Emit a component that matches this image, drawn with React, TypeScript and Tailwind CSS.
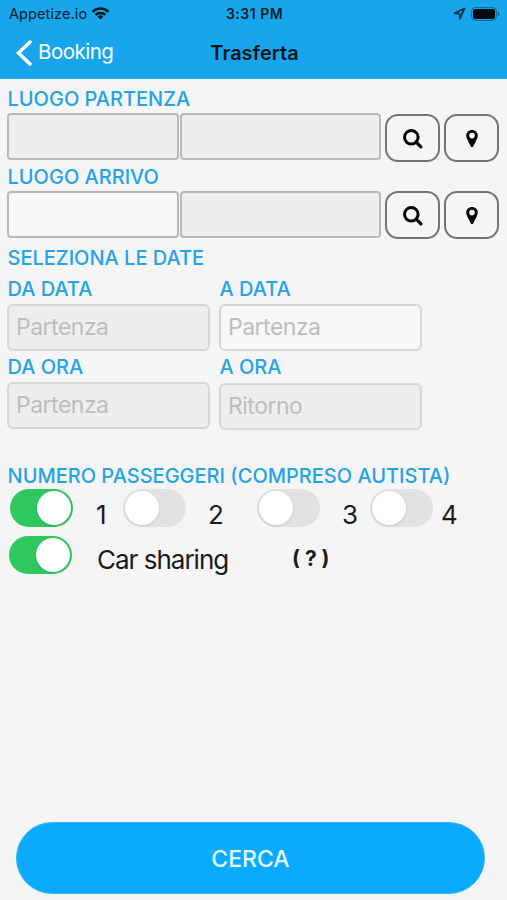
import React from "react";
import { clsx } from "clsx";

function Label({ children, className }: { children: React.ReactNode; className?: string }) {
  return (
    <div className={clsx("whitespace-nowrap text-[20px] font-medium text-[#24a3e6]", className)}>
      {children}
    </div>
  );
}

function Field({ placeholder, className }: { placeholder?: string; className?: string }) {
  return (
    <input
      readOnly
      placeholder={placeholder}
      className={clsx(
        "block h-[47px] min-w-0 border-2 pb-[2px] pl-[7px] pr-2 text-[23px] tracking-[-0.5px] outline-none placeholder:text-[#bdbdbf]",
        className,
      )}
    />
  );
}

function SearchIcon() {
  return (
    <svg width="20" height="20" viewBox="0 0 20 20" fill="none" stroke="#080808">
      <circle cx="8.300" cy="8.300" r="6.800" strokeWidth="3" />
      <path d="M13.200 13.200L17.900 17.800" strokeWidth="3.200" strokeLinecap="round" />
    </svg>
  );
}

function PinIcon() {
  return (
    <svg width="14" height="20" viewBox="0 0 14 20">
      <path
        fillRule="evenodd"
        fill="#080808"
        d="M7 1C3.700 1 1.200 3.400 1.200 6.600c0 1.400.4 2.400 1 3.600l3.600 7.200c.5 1 1.900 1 2.400 0l3.600-7.200c.6-1.200 1-2.200 1-3.600C12.800 3.400 10.300 1 7 1zm0 2.800a2.800 2.800 0 1 1 0 5.600 2.800 2.800 0 0 1 0-5.600z"
      />
    </svg>
  );
}

function IconButton({ children, className }: { children: React.ReactNode; className?: string }) {
  return (
    <button
      className={clsx(
        "flex h-[48px] w-[55px] shrink-0 items-center justify-center rounded-[13px] border-2 border-[#747474]",
        className,
      )}
    >
      {children}
    </button>
  );
}

function PlaceRow({ open, drop }: { open?: boolean; drop?: boolean }) {
  const offset = drop ? "mt-px" : "";
  return (
    <div className="flex h-[48px] items-start pl-[7px]">
      <Field className={clsx("w-[172px] rounded-[4px] border-[#b9b9b9]", open ? "bg-[#f7f7f7]" : "bg-[#eeeeee]")} />
      <Field className="ml-px w-[201px] rounded-[4px] border-[#b9b9b9] bg-[#eeeeee]" />
      <IconButton className={clsx("ml-[4px]", offset)}>
        <span className="mt-[2px]">
          <SearchIcon />
        </span>
      </IconButton>
      <IconButton className={clsx("ml-[4px]", offset)}>
        <span className="mt-[2px]">
          <PinIcon />
        </span>
      </IconButton>
    </div>
  );
}

function Switch({ on, className }: { on?: boolean; className?: string }) {
  return (
    <div
      role="switch"
      aria-checked={!!on}
      className={clsx(
        "flex h-[38px] w-[63px] shrink-0 items-center rounded-full px-[2px]",
        on ? "justify-end bg-[#2fc85f]" : "bg-[#e2e2e4]",
        className,
      )}
    >
      <div className="size-[34px] rounded-full bg-white shadow-[0_1px_3px_rgba(0,0,0,0.13)]" />
    </div>
  );
}

const digit = "mt-[10px] shrink-0 text-[26px] leading-[32px] text-[#1b1b1b]";
const soft = "w-[203px] rounded-[6px] border-[#d6d6d6]";

export default function App() {
  return (
    <div className="flex h-[900px] w-[507px] flex-col overflow-hidden bg-[#f5f5f5] font-['Inter',sans-serif]">
      <header className="h-[79px] shrink-0 bg-[#17a6ec] text-[#071c2b]">
        <div className="grid h-[27px] grid-cols-3 items-center pl-[9px] pr-[7px]">
          <div className="flex items-center gap-[4px]">
            <span className="text-[14.5px] tracking-[0.1px]">Appetize.io</span>
            <svg width="19" height="13" viewBox="0 0 20 14" fill="none" stroke="#071520" strokeWidth="2.700">
              <path d="M1.500 5.200a12 12 0 0 1 17 0" />
              <path d="M4.600 8.600a7.600 7.600 0 0 1 10.800 0" />
              <path d="M10 13.500L6.900 10.400a4.400 4.400 0 0 1 6.200 0z" fill="#071520" stroke="none" />
            </svg>
          </div>
          <div className="text-center text-[14px] font-semibold tracking-[0.5px]">3:31 PM</div>
          <div className="flex items-center justify-end gap-[5px]">
            <svg width="13" height="13" viewBox="0 0 13 13" fill="none" stroke="#0a3047" strokeWidth="1.800" strokeLinejoin="round">
              <path d="M11.500 1.500L1.500 6.300l5.100.3.300 5.100z" />
            </svg>
            <svg width="29" height="14" viewBox="0 0 29 14">
              <rect x=".6" y=".6" width="24.800" height="12.800" rx="3.500" fill="none" stroke="#0b6597" strokeWidth="1" />
              <rect x="2" y="2" width="22" height="10" rx="2.200" fill="#020608" />
              <path d="M26.800 5v4c1.200-.3 1.600-1 1.600-2s-.4-1.700-1.600-2z" fill="#0b6597" />
            </svg>
          </div>
        </div>
        <div className="grid h-[51px] grid-cols-3 items-center pl-[16px] pr-[14px]">
          <div className="flex items-center gap-[6px] text-white">
            <svg width="16" height="26" viewBox="0 0 16 26" fill="none" stroke="white" strokeWidth="3.500" strokeLinecap="round">
              <path d="M14 2L2.500 13 14 24" />
            </svg>
            <span className="text-[20.5px] tracking-[-0.5px]">Booking</span>
          </div>
          <div className="text-center text-[20px] font-semibold text-[#06131d]">Trasferta</div>
        </div>
      </header>

      <main className="flex min-h-0 flex-1 flex-col">
        <Label className="mt-[8px] h-[26px] pl-[7.5px] leading-[24px]">LUOGO PARTENZA</Label>
        <PlaceRow drop />
        <Label className="mt-[4px] h-[26px] pl-[7.5px] leading-[24px]">LUOGO ARRIVO</Label>
        <PlaceRow open />
        <Label className="mt-[7px] h-[24px] pl-[7.5px] leading-[24px]">SELEZIONA LE DATE</Label>

        <div className="mt-[7px] flex gap-[9px] pl-[7px]">
          <div>
            <Label className="h-[27px] pl-[0.5px] leading-[24px]">DA DATA</Label>
            <Field placeholder="Partenza" className={clsx(soft, "bg-[#eeeeee]")} />
            <Label className="mt-[4px] h-[27px] pl-[0.5px] leading-[24px]">DA ORA</Label>
            <Field placeholder="Partenza" className={clsx(soft, "bg-[#eeeeee]")} />
          </div>
          <div>
            <Label className="h-[27px] pl-[0.5px] leading-[24px]">A DATA</Label>
            <Field placeholder="Partenza" className={clsx(soft, "bg-[#f7f7f7]")} />
            <Label className="mt-[4px] h-[28px] pl-[0.5px] leading-[24px]">A ORA</Label>
            <Field placeholder="Ritorno" className={clsx(soft, "bg-[#eeeeee] tracking-[-0.3px]")} />
          </div>
        </div>

        <Label className="mt-[33px] h-[26px] pl-[7.5px] leading-[26px]">NUMERO PASSEGGERI (COMPRESO AUTISTA)</Label>
        <div className="flex h-[47px] items-start pl-[10px]">
          <Switch on />
          <span className={clsx(digit, "ml-[23px] w-[27px]")}>1</span>
          <Switch />
          <span className={clsx(digit, "ml-[22px] w-[49px]")}>2</span>
          <Switch />
          <span className={clsx(digit, "ml-[22px] w-[28px]")}>3</span>
          <Switch />
          <span className={clsx(digit, "ml-[8px]")}>4</span>
        </div>
        <div className="flex items-start pl-[9px]">
          <Switch on />
          <span className="ml-[25px] mt-[8px] w-[195px] whitespace-nowrap text-[26px] leading-[32px] tracking-[-1px] text-[#1b1b1b]">
            Car sharing
          </span>
          <span className="mt-[7px] whitespace-nowrap text-[21px] font-bold leading-[32px] text-[#1b1b1b]">( ? )</span>
        </div>

        <button className="mb-[6px] ml-[16px] mt-auto h-[72px] w-[469px] shrink-0 rounded-full border border-[#35b5f5] bg-[#0aabff] pt-[2px] text-[23px] font-medium text-[#e5f8ff]">
          CERCA
        </button>
      </main>
    </div>
  );
}
